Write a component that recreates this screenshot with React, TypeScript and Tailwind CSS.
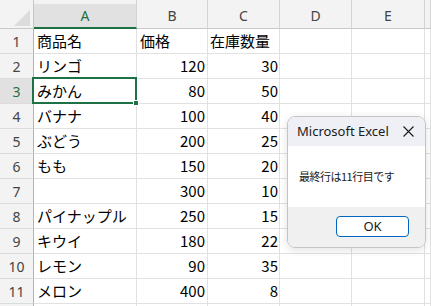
import React from "react";

const rows: [string, string, string][] = [
  ["商品名", "価格", "在庫数量"],
  ["リンゴ", "120", "30"],
  ["みかん", "80", "50"],
  ["バナナ", "100", "40"],
  ["ぶどう", "200", "25"],
  ["もも", "150", "20"],
  ["", "300", "10"],
  ["パイナップル", "250", "15"],
  ["キウイ", "180", "22"],
  ["レモン", "90", "35"],
  ["メロン", "400", "8"],
  ["", "", ""],
];

const font = { fontFamily: '"Noto Sans CJK JP", "Noto Sans", sans-serif' };

export default function App() {
  const cols = "grid-cols-[34px_103px_71px_72px_72px_73px_1fr]";
  return (
    <div
      className="relative w-[431px] h-[306px] overflow-hidden bg-white text-black"
      style={font}
    >
      <div className={`grid ${cols}`}>
        {/* header */}
        <div className="h-[29px] bg-[#f3f3f3] border-r border-b border-[#c8c8c8] relative">
          <div className="absolute right-[3px] bottom-[2px] w-0 h-0 border-l-[16px] border-l-transparent border-b-[16px] border-b-[#dcdcdc]" />
        </div>
        <div className="h-[29px] bg-[#f3f3f3] border-r border-[#d4d4d4] border-b-2 border-b-[#1e7145] flex flex-col">
          <div className="h-[4px]" />
          <div className="flex-1 bg-[#e1e1e1] flex items-center justify-center text-[14px] text-[#1e7145]" style={{ fontFamily: '"Noto Sans", sans-serif' }}>
            A
          </div>
        </div>
        {["B", "C", "D", "E", ""].map((c, i) => (
          <div
            key={i}
            className="h-[29px] bg-[#f3f3f3] border-r border-[#d4d4d4] border-b border-b-[#c8c8c8] flex items-center justify-center pt-[3px] text-[14px] text-[#444]"
            style={{ fontFamily: '"Noto Sans", sans-serif' }}
          >
            {c}
          </div>
        ))}
        {rows.map((r, i) => {
          const sel = i === 2;
          return (
            <React.Fragment key={i}>
              <div
                className={`h-[25px] border-r border-r-[#b4b4b4] border-b border-b-[#dcdcdc] flex items-center justify-center pt-[1px] text-[14px] ${
                  sel ? "bg-[#e1e1e1] text-[#1e7145]" : "bg-[#f3f3f3] text-[#444]"
                }`}
                style={{ fontFamily: '"Noto Sans", sans-serif' }}
              >
                {i < 11 ? i + 1 : ""}
              </div>
              <div className="h-[25px] border-r border-b border-[#e1e1e1] flex items-center pl-[3px] pt-[1px] text-[15px] whitespace-nowrap">
                {r[0]}
              </div>
              <div className={`h-[25px] border-r border-b border-[#e1e1e1] flex items-center justify-end pr-[2px] pt-[1px] text-[15px] ${i === 0 ? "justify-start pl-[3px]" : ""}`}>
                {r[1]}
              </div>
              <div className={`h-[25px] border-r border-b border-[#e1e1e1] flex items-center justify-end pr-[1px] pt-[1px] text-[15px] ${i === 0 ? "justify-start pl-[2px]" : ""}`}>
                {r[2]}
              </div>
              <div className="h-[25px] border-r border-b border-[#e1e1e1]" />
              <div className="h-[25px] border-r border-b border-[#e1e1e1]" />
              <div className="h-[25px] border-r border-b border-[#e1e1e1]" />
            </React.Fragment>
          );
        })}
      </div>

      {/* selection */}
      <div className="absolute left-[32px] top-[77px] w-[105px] h-[27px] border-2 border-[#1e7145]" />
      <div className="absolute left-[133px] top-[100px] w-[6px] h-[6px] bg-[#1e7145] border border-white" />

      {/* dialog */}
      <div className="absolute left-[287px] top-[116px] w-[139px] h-[132px] rounded-[8px] border border-[#c4c4c4] overflow-hidden flex flex-col shadow-[0_2px_8px_rgba(0,0,0,0.12)]" style={{ fontFamily: '"Noto Sans", "Noto Sans CJK JP", sans-serif' }}>
        <div className="h-[29px] bg-[#eff0f6] flex items-center justify-between pl-[9px] pr-[11px]">
          <span className="text-[13px] text-[#1a1a1a] pt-[1px]">Microsoft Excel</span>
          <svg width="11" height="11" viewBox="0 0 11 11">
            <path d="M0.5 0.5 L10.5 10.5 M10.5 0.5 L0.5 10.5" stroke="#1a1a1a" strokeWidth="1.1" />
          </svg>
        </div>
        <div className="h-[61px] bg-white flex items-center pl-[11px]">
          <span className="text-[11px] text-[#1a1a1a] tracking-[-0.5px]" style={font}>最終行は11行目です</span>
        </div>
        <div className="flex-1 bg-[#f0f0f0] flex items-start justify-end pt-[9px] pr-[16px]">
          <div className="w-[73px] h-[21px] rounded-[4px] border border-[#0067c0] bg-white flex items-center justify-center text-[13px] text-[#1a1a1a]">
            OK
          </div>
        </div>
      </div>
    </div>
  );
}
